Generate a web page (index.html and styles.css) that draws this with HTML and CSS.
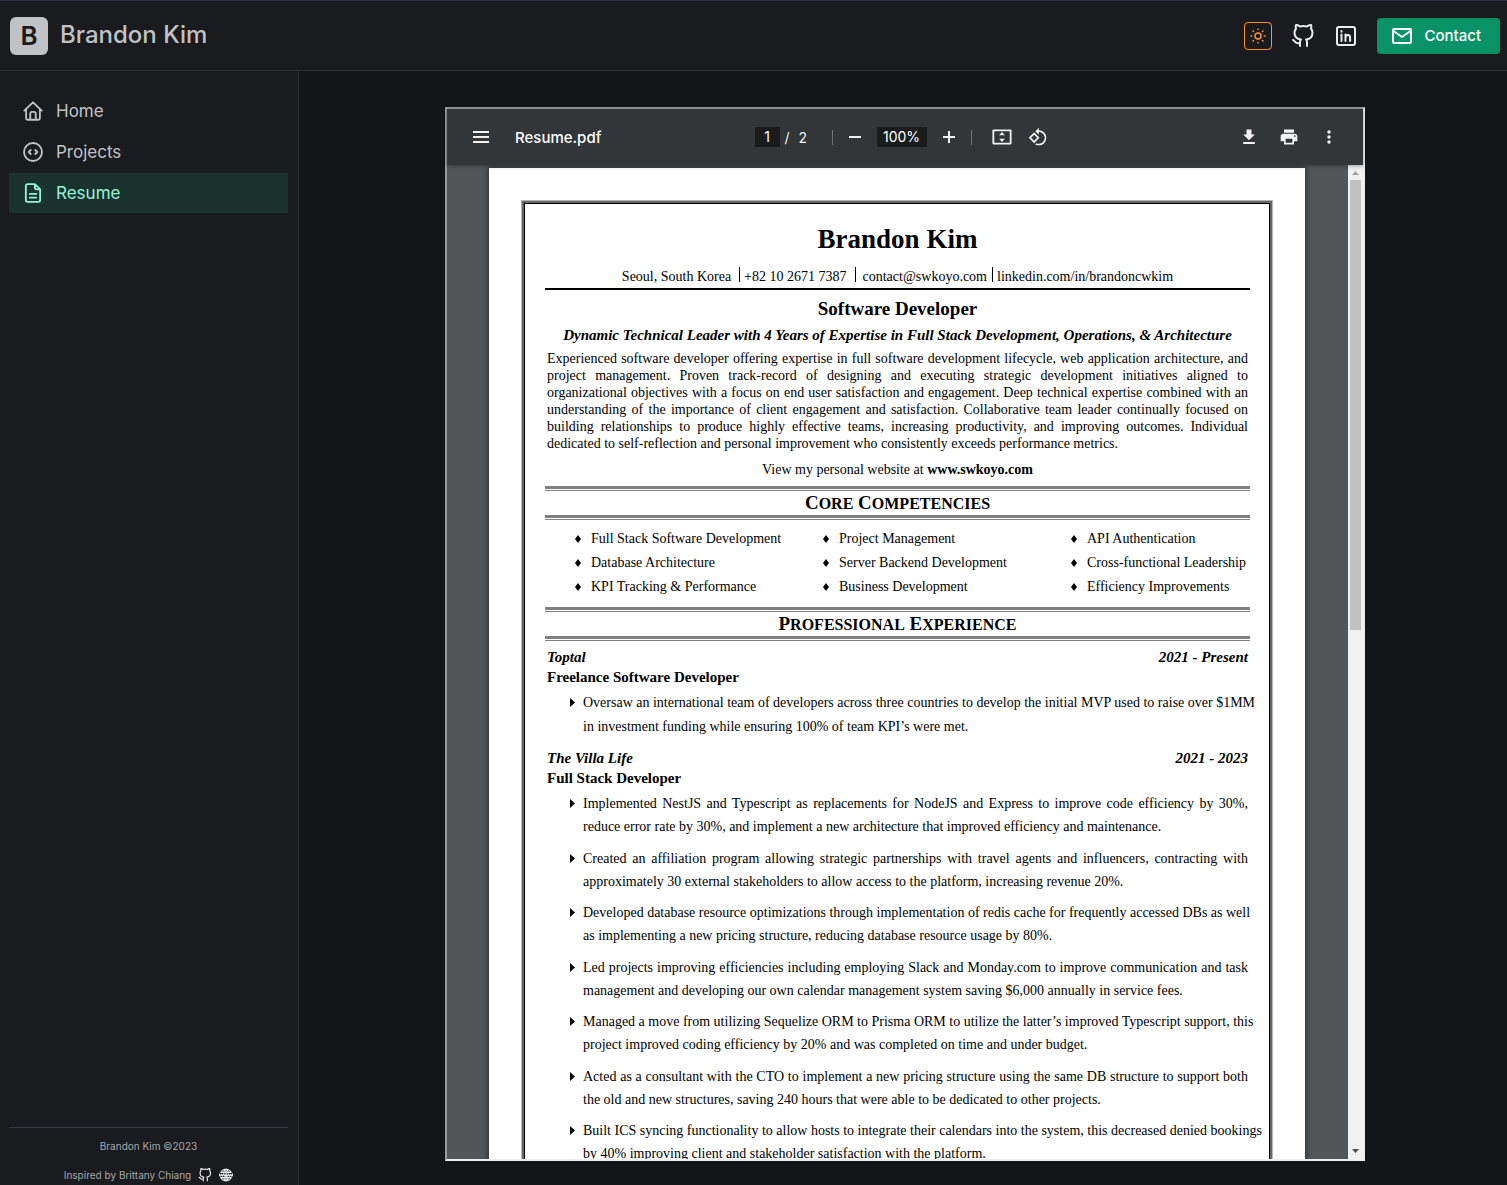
FILE: index.html
```html
<!DOCTYPE html>
<html lang="en">
<head>
<meta charset="utf-8">
<meta name="viewport" content="width=device-width, initial-scale=1">
<title>Brandon Kim</title>
<link rel="stylesheet" href="styles.css">
</head>
<body>
<svg class="sprite" aria-hidden="true">
  <symbol id="i-github" viewBox="0 0 24 24"><path d="M9 19c-5 1.500-5-2.500-7-3m14 6v-3.870a3.370 3.370 0 0 0-.94-2.610c3.140-.35 6.440-1.540 6.440-7A5.440 5.440 0 0 0 20 4.770 5.070 5.070 0 0 0 19.910 1S18.730.65 16 2.480a13.380 13.380 0 0 0-7 0C6.270.65 5.090 1 5.090 1A5.070 5.070 0 0 0 5 4.770a5.440 5.440 0 0 0-1.500 3.780c0 5.420 3.300 6.610 6.440 7A3.370 3.370 0 0 0 9 18.130V22"/></symbol>
</svg>

<header class="header">
  <div class="brand">
    <span class="logo">B</span>
    <span class="brand-name">Brandon Kim</span>
  </div>
  <div class="actions">
    <button class="theme-toggle" type="button" aria-label="Toggle theme">
      <svg class="icon-sun" viewBox="0 0 16 16"><circle cx="8" cy="8" r="3"/><path d="M8 .9v.7M8 14.400v.7M.9 8h.7M14.400 8h.7M3 3l.5.5M12.500 12.500l.5.5M3 13l.5-.5M12.500 3.500l.5-.5"/></svg>
    </button>
    <a class="icon-link" href="#" aria-label="GitHub"><svg class="icon"><use href="#i-github"/></svg></a>
    <a class="icon-link" href="#" aria-label="LinkedIn"><svg class="icon" viewBox="0 0 24 24"><rect x="3" y="3" width="18" height="18" rx="2"/><path d="M7.500 10.500V17M11.500 17v-6.500M11.500 13.500c0-1.700 1-2.600 2.400-2.600s2.200.9 2.200 2.600V17M7.500 7v.7"/></svg></a>
    <a class="contact" href="#"><svg class="icon" viewBox="0 0 24 24"><rect x="3" y="5" width="18" height="14" rx="1"/><path d="M3.500 7l8.500 6 8.500-6"/></svg>Contact</a>
  </div>
</header>

<div class="shell">
  <aside class="sidebar">
    <nav class="nav">
      <a class="nav-item" href="#"><svg class="icon" viewBox="0 0 24 24"><path d="M2.500 11.500L12 2.500l9.500 9M4.500 10v9.500a2 2 0 0 0 2 2h11a2 2 0 0 0 2-2V10M9 21.500V15a2 2 0 0 1 2-2h2a2 2 0 0 1 2 2v6.500"/></svg>Home</a>
      <a class="nav-item" href="#"><svg class="icon" viewBox="0 0 24 24"><circle cx="12" cy="12" r="9.800"/><path d="M9.500 9.800L7.300 12l2.200 2.200M14.500 9.800l2.200 2.200-2.200 2.200"/></svg>Projects</a>
      <a class="nav-item active" href="#" aria-current="page"><svg class="icon" viewBox="0 0 24 24"><path d="M14 2.300H6.200a2 2 0 0 0-2 2v15.400a2 2 0 0 0 2 2h11.600a2 2 0 0 0 2-2V8zM14 2.300V6a2 2 0 0 0 2 2h3.800M8.500 13h7M8.500 17h7"/></svg>Resume</a>
    </nav>
    <footer class="side-footer">
      <p>Brandon Kim ©2023</p>
      <p class="inspired">Inspired by Brittany Chiang
        <a href="#" aria-label="Source on GitHub"><svg class="icon-small"><use href="#i-github"/></svg></a>
        <a href="#" aria-label="Website"><svg class="icon-small" viewBox="0 0 24 24"><path d="M3 7.500h18M3 16.500h18M4 6a10 10 0 0 1 16 0M4 18a10 10 0 0 0 16 0M12 2v20M8.500 6c1-3 2-4 3.500-4s2.500 1 3.500 4M8.500 18c1 3 2 4 3.500 4s2.500-1 3.500-4M0 10l2 4 2-3 2 3 2-4M8 10l2 4 2-3 2 3 2-4M16 10l2 4 2-3 2 3 2-4"/></svg></a>
      </p>
    </footer>
  </aside>

  <main class="main">
    <section class="viewer" aria-label="Resume.pdf">
      <div class="toolbar">
        <div class="tool-left">
          <button class="tool" type="button" aria-label="Menu"><svg class="menu-icon" viewBox="0 0 16 12"><path d="M0 0h16v2H0zM0 5h16v2H0zM0 10h16v2H0z"/></svg></button>
          <span class="file-name">Resume.pdf</span>
        </div>
        <div class="tool-center">
          <input class="field page-field" type="text" value="1" aria-label="Page number">
          <span class="page-total"><span>/</span><span>2</span></span>
          <span class="separator"></span>
          <button class="tool" type="button" aria-label="Zoom out"><svg viewBox="0 0 20 20"><path d="M4 9h12v2H4z"/></svg></button>
          <input class="field zoom-field" type="text" value="100%" aria-label="Zoom level">
          <button class="tool" type="button" aria-label="Zoom in"><svg viewBox="0 0 20 20"><path d="M4 9h5V4h2v5h5v2h-5v5H9v-5H4z"/></svg></button>
          <span class="separator wide"></span>
          <button class="tool" type="button" aria-label="Fit to page"><svg viewBox="0 0 24 24"><path fill-rule="evenodd" d="M2 3h20q1.500 0 1.500 1.500v15Q23.500 21 22 21H2Q.5 21 .5 19.500v-15Q.5 3 2 3zm.7 2v14h18.600V5zM12 6l3.500 4h-7zM12 18l-3.500-4h7z"/></svg></button>
          <button class="tool" type="button" aria-label="Rotate"><svg viewBox="0 0 24 24"><path d="M7.340 6.410L.86 12.900l6.490 6.480 6.490-6.480-6.500-6.490zM3.690 12.900l3.660-3.660L11 12.900l-3.660 3.660-3.650-3.660zm15.670-6.260C17.610 4.880 15.300 4 13 4V.76L8.760 5 13 9.240V6c1.790 0 3.580.68 4.950 2.050 2.730 2.730 2.730 7.170 0 9.900C16.580 19.320 14.790 20 13 20c-.97 0-1.940-.21-2.840-.61l-1.490 1.490C10.020 21.620 11.510 22 13 22c2.300 0 4.610-.88 6.360-2.640 3.520-3.510 3.520-9.210 0-12.720z"/></svg></button>
        </div>
        <div class="tool-right">
          <button class="tool" type="button" aria-label="Download"><svg viewBox="0 0 24 24"><path d="M19 9h-4V3H9v6H5l7 7 7-7zM5 18v2.400h14V18z"/></svg></button>
          <button class="tool" type="button" aria-label="Print"><svg viewBox="0 0 24 24"><path d="M19 8H5c-1.660 0-3 1.340-3 3v6h4v4h12v-4h4v-6c0-1.660-1.340-3-3-3zm-3 11H8v-5h8v5zm3-7c-.55 0-1-.45-1-1s.45-1 1-1 1 .45 1 1-.45 1-1 1zm-1-9H6v4h12V3z"/></svg></button>
          <button class="tool" type="button" aria-label="More actions"><svg viewBox="0 0 24 24"><path d="M12 8c1.100 0 2-.9 2-2s-.9-2-2-2-2 .9-2 2 .9 2 2 2zm0 2c-1.100 0-2 .9-2 2s.9 2 2 2 2-.9 2-2-.9-2-2-2zm0 6c-1.100 0-2 .9-2 2s.9 2 2 2 2-.9 2-2-.9-2-2-2z"/></svg></button>
        </div>
      </div>

      <div class="document">
        <div class="canvas">
          <article class="page">
            <div class="page-frame">
              <h1 class="name">Brandon Kim</h1>
              <div class="contact-row">
                <span>Seoul, South Korea</span><i class="bar"></i><span>+82 10 2671 7387</span><i class="bar even"></i><span>contact@swkoyo.com</span><i class="bar tight"></i><span>linkedin.com/in/brandoncwkim</span>
              </div>
              <p class="role">Software Developer</p>
              <p class="tagline">Dynamic Technical Leader with 4 Years of Expertise in Full Stack Development, Operations, &amp; Architecture</p>
              <p class="summary">
                <span class="line">Experienced software developer offering expertise in full software development lifecycle, web application architecture, and</span>
                <span class="line">project management. Proven track-record of designing and executing strategic development initiatives aligned to</span>
                <span class="line">organizational objectives with a focus on end user satisfaction and engagement. Deep technical expertise combined with an</span>
                <span class="line">understanding of the importance of client engagement and satisfaction. Collaborative team leader continually focused on</span>
                <span class="line">building relationships to produce highly effective teams, increasing productivity, and improving outcomes. Individual</span>
                <span class="line">dedicated to self-reflection and personal improvement who consistently exceeds performance metrics.</span>
              </p>
              <p class="website">View my personal website at <b>www.swkoyo.com</b></p>

              <h2 class="section-title"><span>C<small>ORE</small> C<small>OMPETENCIES</small></span></h2>
              <ul class="skills">
                <li>Full Stack Software Development</li><li>Project Management</li><li>API Authentication</li>
                <li>Database Architecture</li><li>Server Backend Development</li><li>Cross-functional Leadership</li>
                <li>KPI Tracking &amp; Performance</li><li>Business Development</li><li>Efficiency Improvements</li>
              </ul>

              <h2 class="section-title"><span>P<small>ROFESSIONAL</small> E<small>XPERIENCE</small></span></h2>
              <section class="job">
                <div class="job-head"><span>Toptal</span><span>2021 - Present</span></div>
                <h3 class="job-title">Freelance Software Developer</h3>
                <ul class="duties loose">
                  <li><span class="line">Oversaw an international team of developers across three countries to develop the initial MVP used to raise over $1MM</span><span class="line">in investment funding while ensuring 100% of team KPI’s were met.</span></li>
                </ul>
              </section>
              <section class="job">
                <div class="job-head"><span>The Villa Life</span><span>2021 - 2023</span></div>
                <h3 class="job-title">Full Stack Developer</h3>
                <ul class="duties">
                  <li><span class="line">Implemented NestJS and Typescript as replacements for NodeJS and Express to improve code efficiency by 30%,</span><span class="line">reduce error rate by 30%, and implement a new architecture that improved efficiency and maintenance.</span></li>
                  <li><span class="line">Created an affiliation program allowing strategic partnerships with travel agents and influencers, contracting with</span><span class="line">approximately 30 external stakeholders to allow access to the platform, increasing revenue 20%.</span></li>
                  <li><span class="line">Developed database resource optimizations through implementation of redis cache for frequently accessed DBs as well</span><span class="line">as implementing a new pricing structure, reducing database resource usage by 80%.</span></li>
                  <li><span class="line">Led projects improving efficiencies including employing Slack and Monday.com to improve communication and task</span><span class="line">management and developing our own calendar management system saving $6,000 annually in service fees.</span></li>
                  <li><span class="line">Managed a move from utilizing Sequelize ORM to Prisma ORM to utilize the latter’s improved Typescript support, this</span><span class="line">project improved coding efficiency by 20% and was completed on time and under budget.</span></li>
                  <li><span class="line">Acted as a consultant with the CTO to implement a new pricing structure using the same DB structure to support both</span><span class="line">the old and new structures, saving 240 hours that were able to be dedicated to other projects.</span></li>
                  <li><span class="line">Built ICS syncing functionality to allow hosts to integrate their calendars into the system, this decreased denied bookings</span><span class="line">by 40% improving client and stakeholder satisfaction with the platform.</span></li>
                </ul>
              </section>
            </div>
          </article>
        </div>
        <div class="scrollbar" aria-hidden="true">
          <svg class="arrow up" viewBox="0 0 15 15"><path d="M4 10l3.500-4L11 10z"/></svg>
          <div class="track"><div class="thumb"></div></div>
          <svg class="arrow" viewBox="0 0 15 15"><path d="M4 5h7L7.500 9z"/></svg>
        </div>
      </div>
    </section>
  </main>
</div>
</body>
</html>
```
FILE: styles.css
```css
*, *::before, *::after { box-sizing: border-box; }

body {
  margin: 0;
  height: 100vh;
  display: flex;
  flex-direction: column;
  overflow: hidden;
  background: #141517;
  color: #c1c2c5;
  font-family: Inter, "Open Sans", sans-serif;
}

p, h1, h2, h3, ul { margin: 0; padding: 0; }
ul { list-style: none; }
a { color: inherit; text-decoration: none; }
button { padding: 0; background: none; border: 0; color: inherit; font: inherit; }

.sprite { display: none; }

.icon, .icon-small, .icon-sun {
  display: block;
  flex: none;
  fill: none;
  stroke: currentColor;
  stroke-width: 2;
  stroke-linecap: round;
  stroke-linejoin: round;
}
.icon { width: 24px; height: 24px; }
.icon-small { width: 14px; height: 14px; }
.icon-sun { width: 16px; height: 16px; stroke-width: 1.5; }

/* Header */
.header {
  flex: none;
  height: 71px;
  display: flex;
  align-items: center;
  justify-content: space-between;
  padding: 0 7px 0 10px;
  background: #1a1b1e;
  border-top: 1px solid #2d303e;
  border-bottom: 1px solid #2c2e33;
}
.brand { display: flex; align-items: center; gap: 12px; }
.logo {
  width: 38px;
  height: 38px;
  border-radius: 6px;
  background: #c1c2c5;
  color: #1a1b1e;
  font-size: 26px;
  font-weight: 600;
  line-height: 38px;
  text-align: center;
}
.brand-name { padding-bottom: 2px; font-size: 24px; font-weight: 500; line-height: 32px; }
.actions { display: flex; align-items: center; gap: 19px; color: #e9ecef; }
.theme-toggle {
  width: 28px;
  height: 28px;
  display: grid;
  place-items: center;
  border: 1px solid #ff922b;
  border-radius: 4px;
  color: #ff922b;
}
.icon-link .icon { width: 24px; height: 24px; }
.contact {
  height: 36px;
  display: flex;
  align-items: center;
  gap: 10px;
  padding: 0 19px 0 13px;
  border-radius: 4px;
  background: #099268;
  color: #fff;
  font-size: 15px;
  font-weight: 500;
}

/* Layout */
.shell { flex: 1; min-height: 0; display: flex; }

.sidebar {
  flex: none;
  width: 299px;
  display: flex;
  flex-direction: column;
  justify-content: space-between;
  padding: 20px 10px 0 9px;
  background: #1a1b1e;
  border-right: 1px solid #2c2e33;
}
.nav { display: flex; flex-direction: column; gap: 1px; }
.nav-item {
  height: 40px;
  display: flex;
  align-items: center;
  gap: 12px;
  padding: 0 13px;
  font-size: 17px;
  line-height: 38px;
}
.nav-item .icon { width: 22px; height: 22px; }
.nav-item.active { background: #1a332e; color: #96f2d7; }

.side-footer {
  padding: 11px 0 3px;
  border-top: 1px solid #373a40;
  color: #a6a7ab;
  font-size: 10px;
  line-height: 14px;
  text-align: center;
}
.inspired {
  display: flex;
  align-items: center;
  justify-content: center;
  gap: 7px;
  margin-top: 15px;
}
.inspired a { color: #e9ecef; }

.main {
  flex: 1;
  min-width: 0;
  display: flex;
  justify-content: center;
  padding: 36px 20px 24px 24px;
}

/* PDF viewer */
.viewer {
  width: 100%;
  max-width: 920px;
  display: flex;
  flex-direction: column;
  border: 2px solid;
  border-color: #9a9a9a #eeeeee #eeeeee #9a9a9a;
}
.toolbar {
  position: relative;
  z-index: 1;
  flex: none;
  height: 56px;
  display: grid;
  grid-template-columns: 1fr auto 1fr;
  align-items: center;
  padding: 0 14px;
  background: #323639;
  box-shadow: 0 1px 4px rgba(0, 0, 0, 0.35);
  color: #f1f1f1;
}
.tool-left, .tool-center, .tool-right { display: flex; align-items: center; }
.tool-left { gap: 16px; padding-left: 2px; }
.tool-right { justify-content: flex-end; }
.tool { width: 36px; height: 36px; display: grid; place-items: center; }
.tool-right .tool { width: 40px; }
.tool svg { width: 20px; height: 20px; fill: #f1f1f1; }
.tool .menu-icon { width: 16px; height: 12px; }
.file-name { font-size: 15px; font-weight: 500; color: #fff; }
.field {
  height: 20px;
  padding: 0;
  border: 0;
  background: #191b1c;
  color: #fff;
  font: 14px/20px Inter, sans-serif;
  text-align: center;
}
.page-field { width: 25px; }
.zoom-field { width: 50px; margin: 0 4px; }
.page-total { width: 52px; display: flex; gap: 9px; padding-left: 5px; font-size: 14px; }
.separator { width: 1px; height: 15px; margin-right: 4px; background: #6f7274; }
.separator.wide { margin: 0 12px 0 4px; }

.document { flex: 1; min-height: 0; display: flex; background: #525659; }
.canvas { flex: 1; min-width: 0; overflow: hidden; padding: 3px 1px 0 0; }
.page {
  max-width: 816px;
  aspect-ratio: 17 / 22;
  margin: 0 auto;
  padding: 32px;
  background: #fff;
  box-shadow: 0 0 6px 1px rgba(0, 0, 0, 0.45);
  color: #000;
  font: 14px/17px "Liberation Serif", serif;
}
.page-frame {
  height: 100%;
  padding: 23px 22px 0 23px;
  border: 1px solid #b5b5b5;
  box-shadow: inset 0 0 0 2px #666, inset 0 0 0 3px #000;
}

.scrollbar {
  flex: none;
  width: 15px;
  display: flex;
  flex-direction: column;
  background: #f1f1f1;
}
.arrow { width: 15px; height: 15px; fill: #505050; }
.arrow.up { fill: #a3a3a3; }
.track { flex: 1; padding: 0 2px; }
.thumb { height: calc(100% * 7 / 15); background: #c1c1c1; }

/* Resume page */
.name { font-size: 27px; line-height: 30px; text-align: center; }
.contact-row {
  display: flex;
  justify-content: center;
  margin-top: 13px;
  padding-bottom: 1px;
  border-bottom: 2px solid #000;
  line-height: 20px;
}
.bar { width: 1px; height: 15px; margin: 0 4px 0 8px; background: #000; }
.bar.even { margin: 0 7px 0 8px; }
.bar.tight { margin: 0 4px 0 5px; }
.role { margin-top: 8px; font-size: 19px; font-weight: 700; line-height: 22px; text-align: center; }
.tagline {
  margin-top: 5px;
  font-size: 15px;
  font-style: italic;
  font-weight: 700;
  line-height: 20px;
  text-align: center;
  white-space: nowrap;
}
.summary { margin: 5px 2px 0; }
.line { display: block; text-align: justify; text-align-last: justify; white-space: nowrap; }
.line:last-child { text-align-last: left; }
.website { margin-top: 9px; text-align: center; }

.section-title { margin-top: 8px; font-size: 19px; line-height: 24px; text-align: center; }
.section-title::before, .section-title::after {
  content: "";
  display: block;
  height: 5px;
  border-top: 3px solid #808080;
  border-bottom: 1px solid #808080;
}
.section-title span { display: block; height: 24px; }
.section-title small { font-size: 16px; }

.skills {
  display: grid;
  grid-template-columns: 248px 248px 1fr;
  margin-top: 7px;
  padding-left: 30px;
  line-height: 24px;
  white-space: nowrap;
}
.skills li { display: flex; align-items: center; gap: 10px; }
.skills li::before {
  content: "";
  width: 6px;
  height: 8px;
  background: #000;
  clip-path: polygon(50% 0, 100% 50%, 50% 100%, 0 50%);
}

.job { margin-top: 6px; padding: 0 2px; line-height: 20px; }
.job + .job { margin-top: 9px; }
.job-head { display: flex; justify-content: space-between; font-size: 15px; font-style: italic; font-weight: 700; }
.job-title { font-size: 15px; line-height: 20px; }
.duties { margin-top: 4px; padding-left: 36px; line-height: 23px; }
.duties.loose { line-height: 24px; }
.duties li { position: relative; }
.duties li::before {
  content: "";
  position: absolute;
  left: -13px;
  top: 7px;
  width: 5px;
  height: 9px;
  background: #000;
  clip-path: polygon(0 0, 100% 50%, 0 100%);
}
.duties li + li { margin-top: 8px; }
.duties li:nth-child(even) { margin-top: 9px; }
```
